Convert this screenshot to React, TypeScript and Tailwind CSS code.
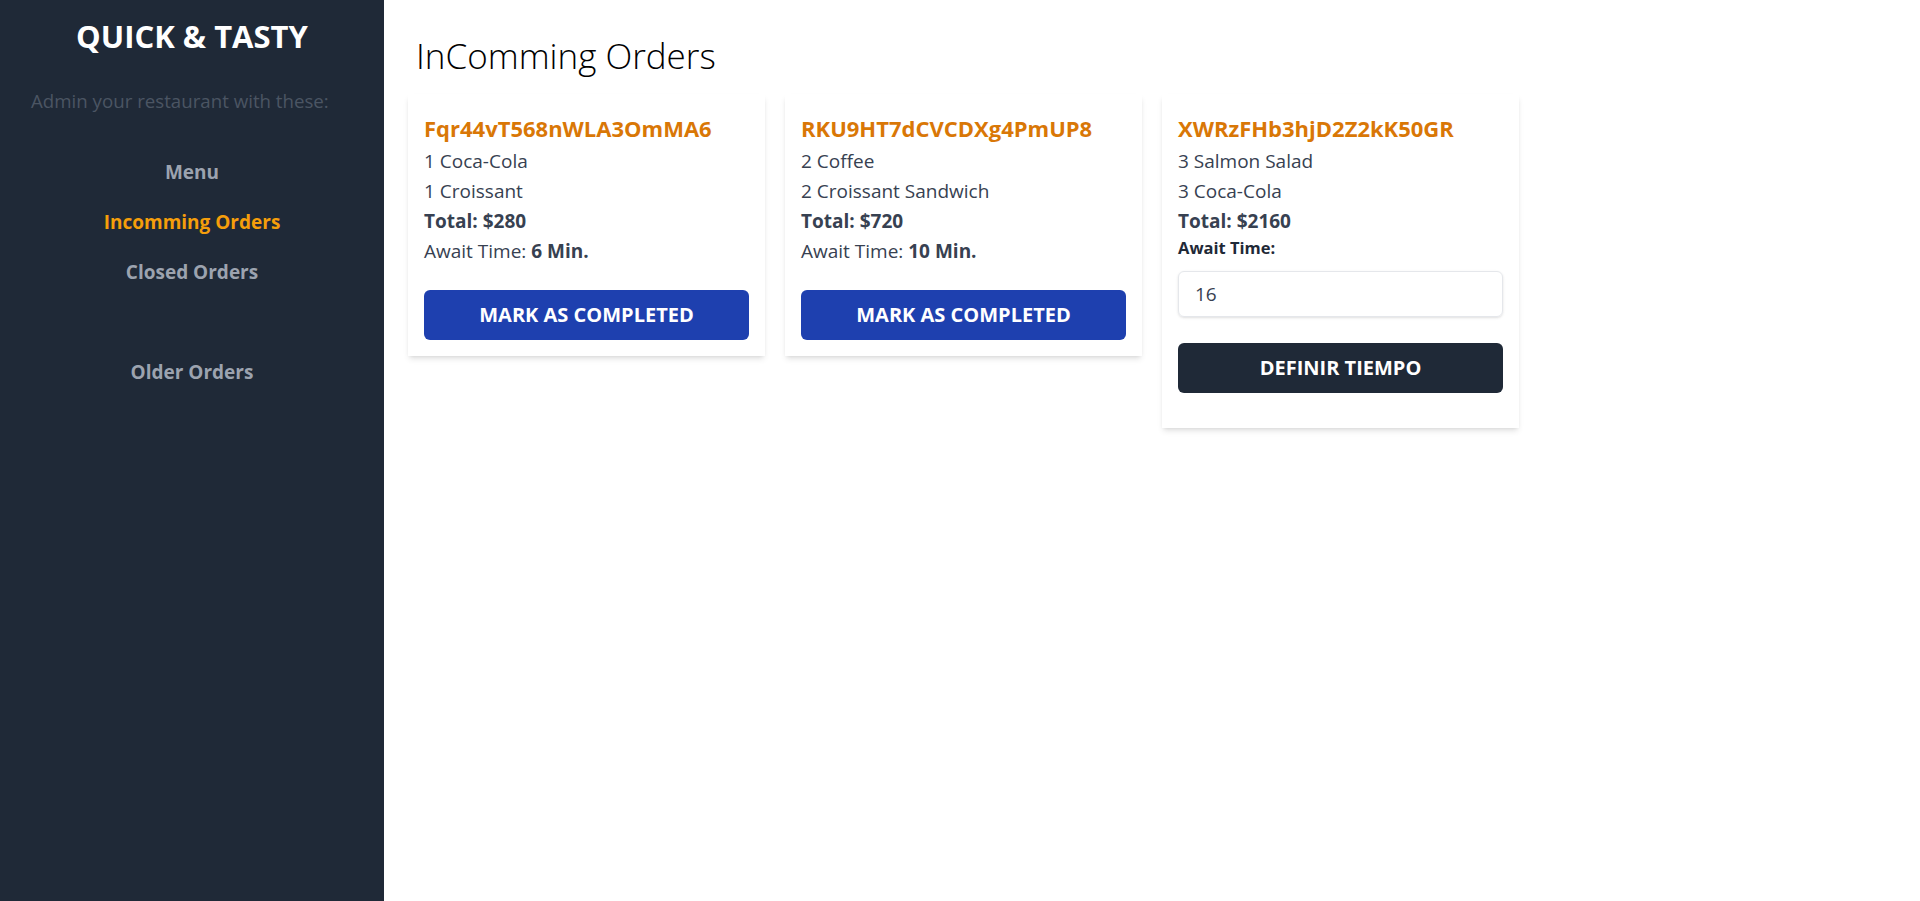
import { useState } from 'react';

type Order = {
    id: string;
    items: { qty: number; name: string }[];
    total: number;
    awaitTime?: number;
};

const orders: Order[] = [
    { id: "Fqr44vT568nWLA3OmMA6", items: [{ qty: 1, name: "Coca-Cola" }, { qty: 1, name: "Croissant" }], total: 280, awaitTime: 6 },
    { id: "RKU9HT7dCVCDXg4PmUP8", items: [{ qty: 2, name: "Coffee" }, { qty: 2, name: "Croissant Sandwich" }], total: 720, awaitTime: 10 },
    { id: "XWRzFHb3hjD2Z2kK50GR", items: [{ qty: 3, name: "Salmon Salad" }, { qty: 3, name: "Coca-Cola" }], total: 2160 },
];

function Sidebar() {
    return (
        <aside className='w-[384px] shrink-0 min-h-screen bg-[#1f2937] flex flex-col items-center'>
            <h1 className='mt-[14px] text-[31px] leading-[44px] font-bold text-white'>QUICK &amp; TASTY</h1>
            <p className='self-start pl-[31px] mt-[29px] text-[18.7px] leading-7 text-[#4b5563]'>Admin your restaurant with these:</p>
            <nav className='mt-[43px] flex flex-col items-center gap-[22px] text-[19px] leading-7 font-bold text-[#9ca3af]'>
                <a href="#" className='hover:text-white'>Menu</a>
                <a href="#" className='text-[#f59e0b]'>Incomming Orders</a>
                <a href="#" className='hover:text-white'>Closed Orders</a>
                <span className='h-7'></span>
                <a href="#" className='hover:text-white'>Older Orders</a>
            </nav>
        </aside>
    );
}

function OrderCard({ order }: { order: Order }) {
    const [time, setTime] = useState("16");

    return (
        <div className='bg-white shadow-md p-4 flex flex-col'>
            <h2 className='text-[22px] leading-9 font-bold text-[#d97706]'>{order.id}</h2>
            <ul className='text-[19px] leading-[30px] text-[#374151]'>
                {order.items.map((item) => (
                    <li key={item.name}>{item.qty} {item.name}</li>
                ))}
                <li className='font-bold'>Total: ${order.total}</li>
                {order.awaitTime !== undefined && (
                    <li>Await Time: <span className='font-bold'>{order.awaitTime} Min.</span></li>
                )}
            </ul>

            {order.awaitTime !== undefined ? (
                <button className='mt-6 h-[50px] w-full bg-[#1e40af] hover:bg-[#1d4ed8] text-white text-[20px] font-bold uppercase rounded-md'>
                    Mark as completed
                </button>
            ) : (
                <form className='flex flex-col mb-[19px]' onSubmit={(e) => e.preventDefault()}>
                    <label htmlFor={order.id} className='text-[16.5px] leading-6 font-bold text-[#1f2937]'>Await Time:</label>
                    <input
                        id={order.id}
                        type="number"
                        value={time}
                        onChange={(e) => setTime(e.target.value)}
                        className='mt-[11px] h-[46px] px-4 text-[19px] text-[#374151] border border-gray-200 rounded-md shadow-sm focus:outline-none'
                    />
                    <button type="submit" className='mt-[26px] h-[50px] w-full bg-[#1f2937] hover:bg-[#374151] text-white text-[20px] font-bold uppercase rounded-md'>
                        Definir tiempo
                    </button>
                </form>
            )}
        </div>
    );
}

export default function App() {
    return (
        <div className='flex min-h-screen bg-white' style={{ fontFamily: '"Open Sans", "Noto Sans", sans-serif' }}>
            <Sidebar />
            <main className='flex-1 px-6 pt-[36px]'>
                <h1 className='px-2 text-[35px] leading-10 font-light text-black'>InComming Orders</h1>
                <div className='mt-[18px] grid grid-cols-4 gap-5 items-start'>
                    {orders.map((order) => (
                        <OrderCard key={order.id} order={order} />
                    ))}
                </div>
            </main>
        </div>
    );
}
